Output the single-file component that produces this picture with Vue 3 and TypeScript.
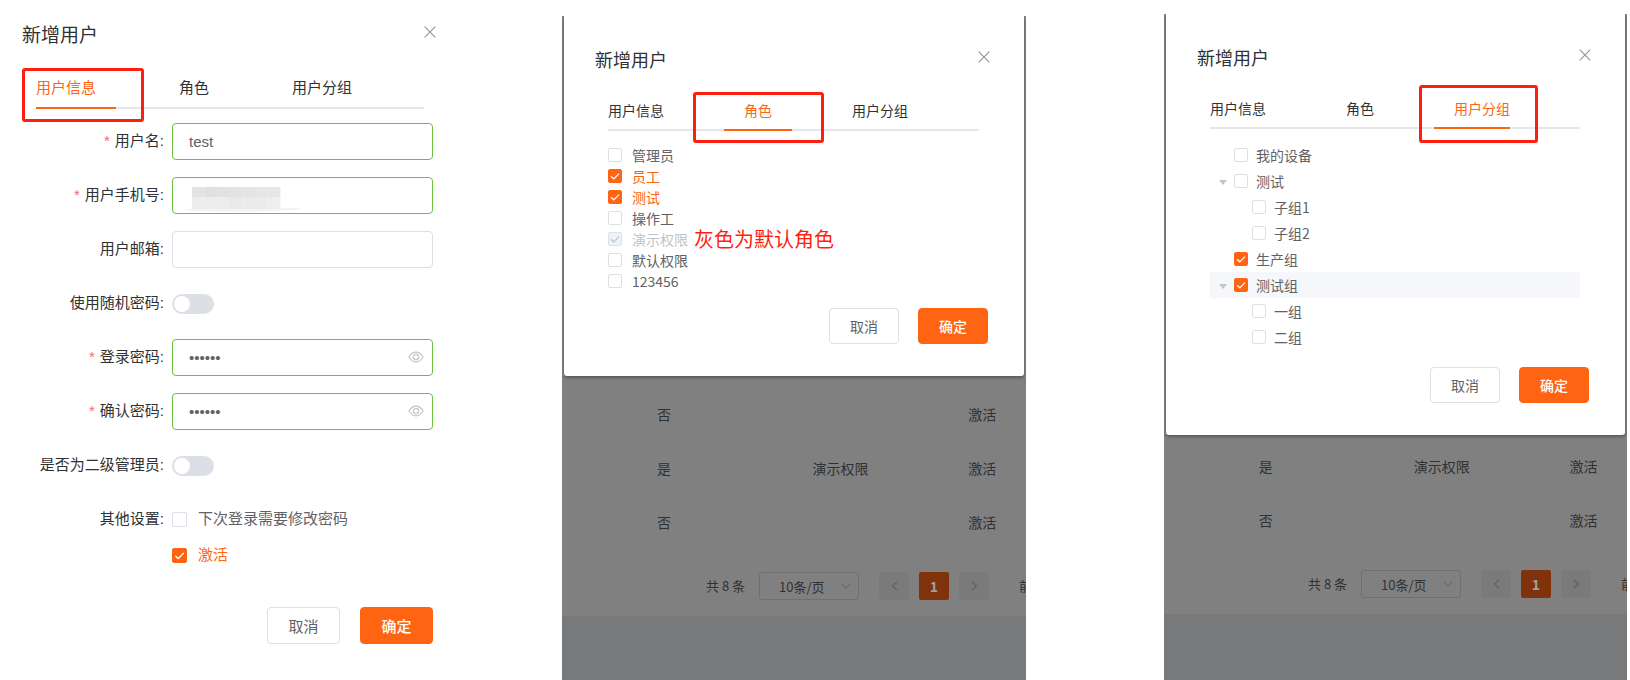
<script setup lang="ts">
import { ref } from 'vue'

type Kind = 'info' | 'roles' | 'groups'

interface CheckItem {
  label: string
  checked: boolean
  disabled?: boolean
}

interface TreeItem {
  label: string
  checked: boolean
  level: number
  parent?: boolean
  hover?: boolean
}

const panels: Kind[] = ['info', 'roles', 'groups']

const tabs: { key: Kind; label: string }[] = [
  { key: 'info', label: '用户信息' },
  { key: 'roles', label: '角色' },
  { key: 'groups', label: '用户分组' },
]

const username = ref('test')
const phone = ref('')
const email = ref('')
const password = ref('123456')
const confirmPassword = ref('123456')
const randomPassword = ref(false)
const secondAdmin = ref(false)
const mustChange = ref(false)
const activated = ref(true)

const roles = ref<CheckItem[]>([
  { label: '管理员', checked: false },
  { label: '员工', checked: true },
  { label: '测试', checked: true },
  { label: '操作工', checked: false },
  { label: '演示权限', checked: true, disabled: true },
  { label: '默认权限', checked: false },
  { label: '123456', checked: false },
])

const groups = ref<TreeItem[]>([
  { label: '我的设备', checked: false, level: 0 },
  { label: '测试', checked: false, level: 0, parent: true },
  { label: '子组1', checked: false, level: 1 },
  { label: '子组2', checked: false, level: 1 },
  { label: '生产组', checked: true, level: 0 },
  { label: '测试组', checked: true, level: 0, parent: true, hover: true },
  { label: '一组', checked: false, level: 1 },
  { label: '二组', checked: false, level: 1 },
])

const tableRows: Record<'roles' | 'groups', string[][]> = {
  roles: [
    ['否', '', '激活'],
    ['是', '演示权限', '激活'],
    ['否', '', '激活'],
  ],
  groups: [
    ['是', '演示权限', '激活'],
    ['否', '', '激活'],
  ],
}

const mosaic = [
  ['#e3e3e4', '#e0e0e1', '#e1e1e2', '#e3e3e4', '#e3e4e4', '#e6e6e6', '#e6e6e7'],
  ['#ededee', '#ecedee', '#ecedee', '#e9e9ea', '#ebebec', '#ebebeb', '#eeeeef'],
]
</script>

<template>
  <main class="page">
    <section v-for="kind in panels" :key="kind" class="panel" :class="'panel-' + kind">
      <div class="window">
        <div class="dialog">
          <header class="head">
            <h2 class="title">新增用户</h2>
            <button type="button" class="close" aria-label="关闭">
              <svg viewBox="0 0 12 12" width="12" height="12"><path d="M0.7 0.7 11.3 11.3M11.3 0.7 0.7 11.3" /></svg>
            </button>
          </header>

          <nav class="tabs">
            <button
              v-for="tab in tabs"
              :key="tab.key"
              type="button"
              class="tab"
              :class="{ active: tab.key === kind }"
            >
              {{ tab.label }}
              <span v-if="tab.key === kind" class="marker"></span>
            </button>
          </nav>

          <form v-if="kind === 'info'" class="form" @submit.prevent>
            <div class="row">
              <label class="name required" for="username">用户名:</label>
              <div class="field"><input id="username" v-model="username" class="text valid" type="text" /></div>
            </div>
            <div class="row">
              <label class="name required" for="phone">用户手机号:</label>
              <div class="field">
                <input id="phone" v-model="phone" class="text valid" type="text" />
                <svg class="mosaic" viewBox="0 0 114 26" width="114" height="26" aria-hidden="true">
                  <path d="M0 25 5 22H114L108 24 62 26Z" fill="#f0f6ee" />
                  <g v-for="(line, r) in mosaic" :key="r">
                    <rect
                      v-for="(c, i) in line"
                      :key="i"
                      :x="5 + i * 12.6"
                      :y="r ? 11 : 1"
                      width="12.8"
                      :height="r ? 12 : 10"
                      :fill="c"
                    />
                  </g>
                </svg>
              </div>
            </div>
            <div class="row">
              <label class="name" for="email">用户邮箱:</label>
              <div class="field"><input id="email" v-model="email" class="text" type="text" /></div>
            </div>
            <div class="row">
              <label class="name" for="random">使用随机密码:</label>
              <input id="random" v-model="randomPassword" class="switch" type="checkbox" role="switch" />
            </div>
            <div class="row">
              <label class="name required" for="pwd">登录密码:</label>
              <div class="field">
                <input id="pwd" v-model="password" class="text valid" type="password" />
                <svg class="eye" viewBox="0 0 16 12" width="16" height="12">
                  <path d="M1 6C3 2.6 5.3 1.2 8 1.2S13 2.6 15 6C13 9.4 10.7 10.8 8 10.8S3 9.4 1 6Z" />
                  <circle cx="8" cy="6" r="2.6" />
                </svg>
              </div>
            </div>
            <div class="row">
              <label class="name required" for="pwd2">确认密码:</label>
              <div class="field">
                <input id="pwd2" v-model="confirmPassword" class="text valid" type="password" />
                <svg class="eye" viewBox="0 0 16 12" width="16" height="12">
                  <path d="M1 6C3 2.6 5.3 1.2 8 1.2S13 2.6 15 6C13 9.4 10.7 10.8 8 10.8S3 9.4 1 6Z" />
                  <circle cx="8" cy="6" r="2.6" />
                </svg>
              </div>
            </div>
            <div class="row">
              <label class="name" for="second">是否为二级管理员:</label>
              <input id="second" v-model="secondAdmin" class="switch" type="checkbox" role="switch" />
            </div>
            <div class="row">
              <span class="name">其他设置:</span>
              <div class="options">
                <label class="check">
                  <span class="box">
                    <input v-model="mustChange" type="checkbox" />
                    <svg viewBox="0 0 14 14"><path d="M3 7.2 5.8 9.8 11 4.6" /></svg>
                  </span>
                  <span>下次登录需要修改密码</span>
                </label>
                <label class="check tinted">
                  <span class="box">
                    <input v-model="activated" type="checkbox" />
                    <svg viewBox="0 0 14 14"><path d="M3 7.2 5.8 9.8 11 4.6" /></svg>
                  </span>
                  <span>激活</span>
                </label>
              </div>
            </div>
          </form>

          <div v-else-if="kind === 'roles'" class="roles">
            <div v-for="role in roles" :key="role.label" class="role">
              <label class="check tinted">
                <span class="box">
                  <input v-model="role.checked" type="checkbox" :disabled="role.disabled" />
                  <svg viewBox="0 0 14 14"><path d="M3 7.2 5.8 9.8 11 4.6" /></svg>
                </span>
                <span>{{ role.label }}</span>
              </label>
              <span v-if="role.disabled" class="note">灰色为默认角色</span>
            </div>
          </div>

          <ul v-else class="tree">
            <li
              v-for="node in groups"
              :key="node.label"
              class="node"
              :class="{ child: node.level === 1, hover: node.hover }"
            >
              <span class="arrow">
                <svg v-if="node.parent" viewBox="0 0 8 5" width="8" height="5"><path d="M0 0H8L4 5Z" /></svg>
              </span>
              <label class="check">
                <span class="box">
                  <input v-model="node.checked" type="checkbox" />
                  <svg viewBox="0 0 14 14"><path d="M3 7.2 5.8 9.8 11 4.6" /></svg>
                </span>
                <span>{{ node.label }}</span>
              </label>
            </li>
          </ul>

          <footer class="actions">
            <button type="button" class="btn">取消</button>
            <button type="button" class="btn primary">确定</button>
          </footer>
        </div>

        <div v-if="kind !== 'info'" class="behind">
          <table class="table">
            <tbody>
              <tr v-for="(cells, r) in tableRows[kind]" :key="r">
                <td v-for="(cell, c) in cells" :key="c">{{ cell }}</td>
              </tr>
            </tbody>
          </table>
          <div class="pager">
            <span class="total">共 8 条</span>
            <span class="size">
              <select aria-label="每页条数">
                <option>10条/页</option>
              </select>
              <svg viewBox="0 0 10 6" width="10" height="6"><path d="M1 1 5 5 9 1" /></svg>
            </span>
            <button type="button" class="pg" aria-label="上一页">
              <svg viewBox="0 0 7 10" width="7" height="10"><path d="M6 1 1.5 5 6 9" /></svg>
            </button>
            <button type="button" class="pg current">1</button>
            <button type="button" class="pg" aria-label="下一页">
              <svg viewBox="0 0 7 10" width="7" height="10"><path d="M1 1 5.5 5 1 9" /></svg>
            </button>
            <span class="jump">前</span>
          </div>
          <div class="rest"></div>
        </div>
      </div>
    </section>
  </main>
</template>

<style>
body {
  background: #fff;
}
</style>

<style scoped>
.page,
.page * {
  box-sizing: border-box;
}
.page {
  display: grid;
  grid-template-columns: 562fr 602fr 466fr;
  min-height: 100vh;
  font-family: 'Liberation Sans', 'Noto Sans CJK SC', sans-serif;
  font-size: 14px;
  line-height: 20px;
  color: #303133;
}
.page button,
.page input,
.page select {
  font-family: inherit;
  font-size: inherit;
  margin: 0;
}
.panel {
  display: flex;
  min-width: 0;
}
.panel-info {
  padding: 0 129px 0 22px;
  font-size: 15px;
}
.panel-roles,
.panel-groups {
  font-family: 'Noto Sans CJK SC', sans-serif;
}
.panel-roles {
  padding: 16px 138px 0 0;
}
.panel-groups {
  padding: 14px 3px 0 0;
}
.window {
  flex: 1;
  min-width: 0;
  display: flex;
  flex-direction: column;
}
.panel-roles .window,
.panel-groups .window {
  padding: 0 2px;
  background: #808080;
  overflow: hidden;
}
.panel-roles .dialog,
.panel-groups .dialog {
  padding: 30px 36px 32px 31px;
  background: #fff;
  border-radius: 0 0 3px 3px;
  box-shadow: 0 2px 3px rgba(0, 0, 0, 0.3);
}
.panel-info .dialog {
  padding-top: 23px;
}

/* header */
.head {
  display: flex;
  justify-content: space-between;
  align-items: center;
  height: 26px;
}
.panel-info .head {
  margin-right: -3px;
  margin-bottom: 18px;
}
.panel-roles .head,
.panel-groups .head {
  margin-right: -2px;
  margin-bottom: 17px;
}
.title {
  margin: 0;
  font-size: 18px;
  font-weight: 400;
  line-height: 26px;
}
.panel-info .title {
  font-size: 19px;
}
.close {
  display: flex;
  align-self: flex-start;
  padding: 5px 0;
  border: 0;
  background: none;
}
.panel-info .close {
  padding-top: 3px;
}
.close svg {
  fill: none;
  stroke: #909399;
  stroke-width: 1.1;
}

/* tabs */
.tabs {
  display: flex;
  gap: 40px;
  height: 42px;
  box-shadow: inset 0 -2px #e4e7ed;
}
.panel-info .tabs {
  gap: 43px;
  margin: 0 9px 0 14px;
}
.panel-roles .tabs,
.panel-groups .tabs {
  margin: 0 9px 0 13px;
}
.tab {
  position: relative;
  padding: 0 20px;
  border: 0;
  background: none;
  color: #303133;
  line-height: 42px;
  white-space: nowrap;
}
.tab:first-child {
  padding-left: 0;
}
.tab:last-child {
  padding-right: 0;
}
.tab.active {
  color: #ff6413;
  box-shadow: inset 0 -2px #ff6413;
}
.marker {
  position: absolute;
  border: 3px solid #ff1f10;
  border-radius: 3px;
  pointer-events: none;
}
.panel-info .marker {
  inset: 1px -28px -13px -14px;
}
.panel-roles .marker {
  inset: 3px -32px -12px -31px;
}
.panel-groups .marker {
  inset: -2px -28px -14px -15px;
}

/* form */
.form {
  display: flex;
  flex-direction: column;
  gap: 17px;
  padding-top: 14px;
}
.row {
  display: grid;
  grid-template-columns: 142px 1fr;
  column-gap: 8px;
  align-items: center;
  min-height: 37px;
}
.name {
  line-height: 36px;
  text-align: right;
  white-space: nowrap;
  align-self: start;
}
.required::before {
  content: '*';
  margin-right: 5px;
  color: #f56c6c;
}
.field {
  position: relative;
}
.text {
  display: block;
  width: 100%;
  height: 37px;
  padding: 0 32px 0 16px;
  border: 1px solid #dcdfe6;
  border-radius: 4px;
  background: #fff;
  color: #606266;
  outline: none;
}
.text.valid {
  border-color: #67c23a;
}
.mosaic {
  position: absolute;
  left: 15px;
  top: 9px;
}
.eye {
  position: absolute;
  right: 9px;
  top: 12px;
  fill: none;
  stroke: #c0c4cc;
  stroke-width: 1.2;
}
.switch {
  position: relative;
  width: 42px;
  height: 20px;
  border-radius: 10px;
  background: #dcdfe6;
  appearance: none;
}
.switch::after {
  content: '';
  position: absolute;
  left: 2px;
  top: 2px;
  width: 16px;
  height: 16px;
  border-radius: 50%;
  background: #fff;
}
.options .check {
  height: 36px;
  gap: 11px;
}

/* checkboxes */
.check {
  display: flex;
  align-items: center;
  gap: 10px;
  color: #606266;
  white-space: nowrap;
}
.box {
  position: relative;
  width: 14px;
  height: 14px;
}
.panel-info .box {
  width: 15px;
  height: 15px;
}
.box input {
  display: block;
  width: 100%;
  height: 100%;
  border: 1px solid #dcdfe6;
  border-radius: 2px;
  background: #fff;
  appearance: none;
}
.box svg {
  position: absolute;
  inset: 0;
  visibility: hidden;
  fill: none;
  stroke: #fff;
  stroke-width: 1.2;
  pointer-events: none;
}
.box input:checked {
  border-color: #ff6413;
  background: #ff6413;
}
.box input:checked + svg {
  visibility: visible;
}
.box input:disabled {
  border-color: #dcdfe6;
  background: #edf2fc;
}
.box input:disabled + svg {
  stroke: #c0c4cc;
}
.tinted:has(input:checked) {
  color: #ff6413;
}
.tinted:has(input:disabled) {
  color: #c0c4cc;
}

/* roles */
.roles {
  padding: 13px 0 0 13px;
}
.role {
  display: flex;
  align-items: center;
  gap: 6px;
  height: 21px;
}
.note {
  font-size: 20px;
  color: #ff1f10;
  white-space: nowrap;
}

/* tree */
.tree {
  margin: 0 9px 0 13px;
  padding: 13px 0 0;
  list-style: none;
}
.node {
  display: flex;
  align-items: center;
  height: 26px;
}
.node.child {
  padding-left: 18px;
}
.node.hover {
  background: #f5f7fa;
}
.node .check {
  gap: 8px;
}
.arrow {
  display: flex;
  width: 24px;
  padding: 2px 0 0 9px;
}
.arrow svg {
  fill: #c0c4cc;
}

/* buttons */
.actions {
  display: flex;
  justify-content: flex-end;
  gap: 19px;
  padding-top: 17px;
}
.panel-info .actions {
  gap: 20px;
  padding-top: 34px;
}
.btn {
  width: 70px;
  height: 36px;
  padding: 0;
  border: 1px solid #dcdfe6;
  border-radius: 4px;
  background: #fff;
  color: #606266;
}
.panel-info .btn {
  width: 73px;
  height: 37px;
}
.btn.primary {
  border-color: #ff6413;
  background: #ff6413;
  color: #fff;
  font-weight: 500;
}

/* dimmed list page */
.behind {
  flex: 1;
  display: flex;
  flex-direction: column;
  margin: 0 -2px;
  padding-top: 12px;
  color: #303133;
}
.panel-groups .behind {
  padding-top: 5px;
}
.table {
  width: 100%;
  border-collapse: collapse;
  table-layout: fixed;
}
.table td {
  height: 54px;
  padding: 0 0 2px;
  text-align: center;
}
.table td:nth-child(1) {
  width: 44%;
}
.table td:nth-child(2) {
  width: 32%;
}
.table td:nth-child(3) {
  padding-left: 24px;
}
.pager {
  display: flex;
  align-items: center;
  gap: 10px;
  height: 28px;
  margin: 22px 0 16px;
  padding-left: 144px;
  white-space: nowrap;
  overflow: hidden;
}
.total {
  flex: none;
  width: 43px;
  font-size: 13px;
}
.size {
  flex: none;
  position: relative;
  width: 100px;
  margin-right: 10px;
}
.size select {
  display: block;
  width: 100%;
  height: 28px;
  padding: 0 0 0 19px;
  border: 1px solid #6e6f73;
  border-radius: 3px;
  background: none;
  color: #303133;
  font-size: 13px;
  appearance: none;
}
.size svg {
  position: absolute;
  right: 8px;
  top: 11px;
  fill: none;
  stroke: #606266;
}
.pg {
  flex: none;
  display: flex;
  align-items: center;
  justify-content: center;
  width: 30px;
  height: 28px;
  padding: 0;
  border: 0;
  border-radius: 2px;
  background: #7a7a7b;
}
.pg svg {
  fill: none;
  stroke: #606266;
  stroke-width: 1.3;
}
.pg.current {
  background: #80320a;
  color: #a0a0a0;
  font-weight: 700;
}
.jump {
  flex: none;
  margin-left: 20px;
  font-size: 13px;
}
.rest {
  flex: 1;
  background: #78797b;
}
</style>
